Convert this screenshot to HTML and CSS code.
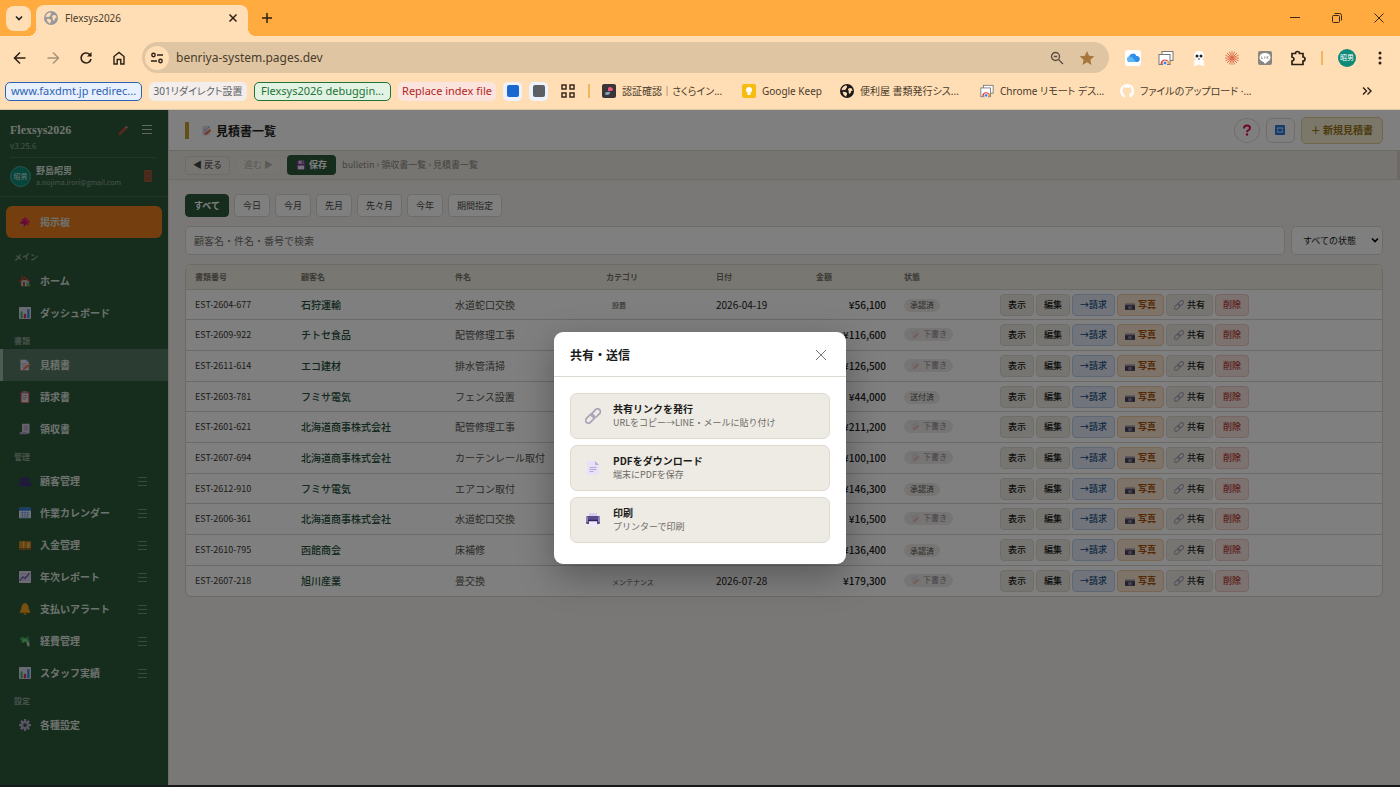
FILE: index.html
```html
<!DOCTYPE html>
<html lang="ja">
<head>
<meta charset="utf-8">
<title>Flexsys2026</title>
<link rel="stylesheet" href="styles.css">
</head>
<body>
<svg class="sprite" aria-hidden="true">
  <symbol id="i-link" viewBox="0 0 16 16"><g fill="none" stroke="#aaa0b8" stroke-width="1.700"><rect x="0" y="8" width="10" height="5.600" rx="2.800" transform="rotate(-45 5 10.800)"/><rect x="6" y="2.400" width="10" height="5.600" rx="2.800" transform="rotate(-45 11 5.200)"/></g></symbol>
  <symbol id="i-page" viewBox="0 0 16 16"><path d="M2 1h8l4 4v10H2z" fill="#e9e2f6"/><path d="M10 1v4h4z" fill="#b9aed2"/><path d="M4.500 7.500h7M4.500 9.500h7M4.500 11.500h4" stroke="#b6a6e0"/></symbol>
  <symbol id="i-printer" viewBox="0 0 16 16"><path d="M4 1h8v4H4z" fill="#d9cdf2"/><rect x="1" y="4" width="14" height="8" rx="1.500" fill="#5b4a8a"/><rect x="1" y="5" width="2" height="5" fill="#9484bd"/><rect x="13" y="5" width="2" height="5" fill="#9484bd"/><path d="M4 9h8v6H4z" fill="#efe9fb"/><path d="M3 8.500h10" stroke="#33255c" stroke-width="1.500"/></symbol>
  <symbol id="i-memo" viewBox="0 0 16 16"><path d="M2 1h8l3 3v11H2z" fill="#e4dcec"/><path d="M10 1v3h3z" fill="#62b7e6"/><path d="M4 6h6M4 8.500h5M4 11h3" stroke="#a79db8"/><path d="M6 12l7-6 2 2-7 6-3 1z" fill="#ee6a4a"/><path d="M13 6l2 2-1.500 1.300-2-2z" fill="#e8a33a"/></symbol>
  <symbol id="i-chart" viewBox="0 0 16 16"><rect width="16" height="16" rx="1" fill="#d9d4e4"/><path d="M2 6h3v9H2z" fill="#35b96a"/><path d="M6.500 9h3v6h-3z" fill="#e0345e"/><path d="M11 3h3v12h-3z" fill="#2f86e0"/></symbol>
  <symbol id="i-house" viewBox="0 0 16 16"><path d="M3 7h10v8H3z" fill="#d8cfc8"/><path d="M0 8l7-6 8 6v2L7 4.500 1 10z" fill="#c0452e"/><path d="M3 1h2v4H3z" fill="#9a4a36"/><path d="M5 9h3v6H5z" fill="#a5532f"/><path d="M9.500 9h2.500v2.500H9.500z" fill="#4a9fe0"/><path d="M10 12h5v3h-5z" fill="#5aa245"/></symbol>
  <symbol id="i-clip" viewBox="0 0 16 16"><rect x="2" y="1" width="12" height="15" rx="1" fill="#b5505c"/><path d="M3.500 3h9v12h-9z" fill="#e5d5d8"/><path d="M5 0h6v3H5z" fill="#8e8496"/><path d="M5 6h6M5 8.500h6M5 11h4" stroke="#9b7f90"/></symbol>
  <symbol id="i-receipt" viewBox="0 0 16 16"><path d="M4 1h10v13H4z" fill="#cfc9dc"/><path d="M1 12h10v3H1z" fill="#aaa2bc"/><path d="M6 4h6M6 6.500h6M6 9h6" stroke="#8e86a6"/></symbol>
  <symbol id="i-people" viewBox="0 0 16 16"><g fill="#43307e"><circle cx="5" cy="6" r="3"/><circle cx="11" cy="6" r="3"/><path d="M0 15v-3q0-3 4-3h8q4 0 4 3v3z"/></g></symbol>
  <symbol id="i-cal" viewBox="0 0 16 16"><rect y="1" width="16" height="14" rx="1" fill="#e8e6f2"/><path d="M0 1h16v4H0z" fill="#2f7fdc"/><path d="M2 7.500h12M2 10.500h12M2 13.500h12M4.500 6v9M8 6v9M11.500 6v9" stroke="#6ea4e4"/></symbol>
  <symbol id="i-money" viewBox="0 0 16 16"><rect y="3" width="16" height="11" fill="#d08620"/><path d="M5 3h2v11H5zM11 5h3v7h-3z" fill="#f0b85c"/><path d="M0 12h16v2H0z" fill="#9a6018"/></symbol>
  <symbol id="i-trend" viewBox="0 0 16 16"><rect width="16" height="16" rx="1" fill="#dcd6ea"/><path d="M1 4h14M1 8h14M1 12h14" stroke="#b3a8d0"/><path d="M1 13l4-5 3 2 6-7" fill="none" stroke="#5d4da8" stroke-width="1.600"/></symbol>
  <symbol id="i-bell" viewBox="0 0 16 16"><path d="M8 0q5 1 5 8l2 4v1H1v-1l2-4q0-7 5-8z" fill="#f0a31c"/><circle cx="8" cy="14" r="2" fill="#c07c14"/></symbol>
  <symbol id="i-cash" viewBox="0 0 16 16"><path d="M0 5l5-3 3 2 6-3-2 4 3 2-3 2-2-1-4 3-4-1 2-3z" fill="#3aa655"/><path d="M3 6l6-1 5 5-2 1-4-3-3 1z" fill="#79cf8a"/><path d="M10 9l4 1v5h-3z" fill="#b8c8b8"/></symbol>
  <symbol id="i-gear" viewBox="0 0 16 16"><g stroke="#b3a9c8" stroke-width="3"><path d="M8 0v16M0 8h16M2.500 2.500l11 11M13.500 2.500l-11 11"/></g><circle cx="8" cy="8" r="5.300" fill="#b3a9c8"/><circle cx="8" cy="8" r="2.500" fill="#2d5a3d"/></symbol>
  <symbol id="i-pin" viewBox="0 0 16 16"><path d="M8 1l7 7-2 1-1 4-9-9 4-1z" fill="#e8246c"/><path d="M1 9l6-4 4 5-4 4z" fill="#c21660"/><path d="M5 10l2 1-6 5z" fill="#b0a0b0"/></symbol>
  <symbol id="i-pencil" viewBox="0 0 16 16"><path d="M2 12L11 3l3 3-9 9-4 1z" fill="#b8503c"/><path d="M11 3l2-2 3 3-2 2z" fill="#c89090"/></symbol>
  <symbol id="i-door" viewBox="0 0 16 16"><path d="M3 0h10v16H3z" fill="#a1583a"/><path d="M5 2h6v5H5zM5 9h6v5H5z" fill="#935034"/></symbol>
  <symbol id="i-disk" viewBox="0 0 16 16"><path d="M1 1h12l2 2v12H1z" fill="#7b3f98"/><path d="M4 1h8v5H4z" fill="#d8d0e4"/><path d="M3 9h10v6H3z" fill="#efe8f6"/><path d="M9 2h2v3H9z" fill="#58306f"/></symbol>
  <symbol id="i-camera" viewBox="0 0 16 16"><path d="M0 6h16v10H0z" fill="#5a5468"/><path d="M0 6h16v2H0z" fill="#a49fb4"/><circle cx="8" cy="12" r="3" fill="#8d88a0"/><path d="M1 10h3v4H1zM12 10h3v4h-3z" fill="#3f3a4c"/></symbol>
  <symbol id="i-globe" viewBox="0 0 16 16"><circle cx="8" cy="8" r="8" fill="currentColor"/><path d="M7 1.500Q9 3 7.500 4.500T6 7Q4 6 2 7.500 1.500 3.500 7 1.500zM9.500 5.500Q11 4 13.500 5l1 3q-2-1-2 1t-2 2q-1-1-.5-2.500t-1-1.500zM3 9q2.500-.5 4 .5T8 12q-1 1-1 2.500Q3.500 13 3 9z" fill="#ffdeb5"/></symbol>
  <symbol id="i-remote" viewBox="0 0 16 16"><rect x="4" y="1.500" width="11" height="9" fill="#fff" stroke="#777"/><rect x="1" y="4.500" width="11" height="10" fill="#fff" stroke="#777"/><path d="M2.500 14a4.500 4.500 0 0 1 9 0z" fill="#e04848"/><path d="M9 10.500a4.500 4.500 0 0 1 2.500 3.500H9z" fill="#f2b330"/><circle cx="7" cy="13" r="2" fill="#3d7fe0" stroke="#fff"/></symbol>
</svg>

<header class="browser">
  <div class="tabstrip">
    <button class="tab-search" aria-label="タブを検索"><svg width="10" height="10" viewBox="0 0 10 10"><path d="M2 3.500l3 3 3-3" fill="none" stroke="#222" stroke-width="1.600"/></svg></button>
    <div class="tab">
      <svg class="favicon" width="14" height="14"><use href="#i-globe"/></svg>
      <span class="tab-title">Flexsys2026</span>
      <button class="bare" aria-label="タブを閉じる"><svg width="10" height="10" viewBox="0 0 10 10"><path d="M1.500 1.500l7 7M8.500 1.500l-7 7" stroke="#2c2014" stroke-width="1.500"/></svg></button>
    </div>
    <button class="bare new-tab" aria-label="新しいタブ"><svg width="12" height="12" viewBox="0 0 12 12"><path d="M6 1v10M1 6h10" stroke="#2c2014" stroke-width="1.500"/></svg></button>
    <div class="window-buttons">
      <button class="bare" aria-label="最小化"><svg width="12" height="12" viewBox="0 0 12 12"><path d="M1 5.500h10" stroke="#3a2a14"/></svg></button>
      <button class="bare" aria-label="元に戻す"><svg width="12" height="12" viewBox="0 0 12 12"><g fill="none" stroke="#3a2a14"><rect x="1.500" y="3.500" width="7" height="7" rx="1"/><path d="M3.500 1.500h5a2 2 0 0 1 2 2v5"/></g></svg></button>
      <button class="bare" aria-label="閉じる"><svg width="12" height="12" viewBox="0 0 12 12"><path d="M1.500 1.500l9 9M10.500 1.500l-9 9" stroke="#3a2a14"/></svg></button>
    </div>
  </div>

  <div class="toolbar">
    <nav class="nav-icons">
      <button class="bare" aria-label="戻る"><svg width="16" height="16" viewBox="0 0 16 16"><path d="M13.500 8h-11M8 2.500L2.500 8 8 13.500" fill="none" stroke="#2c2014" stroke-width="1.500"/></svg></button>
      <button class="bare" aria-label="進む"><svg width="16" height="16" viewBox="0 0 16 16"><path d="M2.500 8h11M8 2.500L13.500 8 8 13.500" fill="none" stroke="#a8937a" stroke-width="1.500"/></svg></button>
      <button class="bare" aria-label="再読み込み"><svg width="16" height="16" viewBox="0 0 16 16"><path d="M13 9a5 5 0 1 1-1.500-4.700L13 6" fill="none" stroke="#2c2014" stroke-width="1.600"/><path d="M13.500 2v4.500H9z" fill="#2c2014"/></svg></button>
      <button class="bare" aria-label="ホーム"><svg width="16" height="16" viewBox="0 0 16 16"><path d="M3 14V6.500L8 2.500l5 4V14H9.800V9.500H6.200V14z" fill="none" stroke="#2c2014" stroke-width="1.400"/></svg></button>
    </nav>
    <div class="omnibox">
      <button class="site-info" aria-label="サイト情報"><svg width="14" height="14" viewBox="0 0 14 14"><g fill="none" stroke="#2c2014" stroke-width="1.400"><circle cx="3.500" cy="4" r="1.700"/><path d="M7 4h6M1 10h6"/><circle cx="10.500" cy="10" r="1.700"/></g></svg></button>
      <input class="address" aria-label="アドレス" value="benriya-system.pages.dev">
      <svg width="14" height="14" viewBox="0 0 14 14"><g fill="none" stroke="#5c4f40" stroke-width="1.400"><circle cx="5.500" cy="5.500" r="4"/><path d="M8.500 8.500l4.500 4.500M3.800 5.500h3.400"/></g></svg>
      <svg width="16" height="16" viewBox="0 0 16 16"><path d="M8 1l2.100 4.800 5.200.5-3.900 3.500 1.100 5.100L8 12.200l-4.500 2.700 1.100-5.100L.7 6.300l5.200-.5z" fill="#a8763c"/></svg>
    </div>
    <div class="extensions">
      <svg width="16" height="16" viewBox="0 0 16 16"><rect width="16" height="16" rx="3" fill="#fff"/><path d="M4 12a3 3 0 0 1 0-5.500A4 4 0 0 1 11.500 6 3 3 0 0 1 12 12z" fill="#2f8fe6"/><path d="M4 12a3 3 0 0 1 0-5.500q2-.5 3.500 1L11 12z" fill="#5db6f6"/></svg>
      <svg width="16" height="16"><use href="#i-remote"/></svg>
      <svg width="16" height="16" viewBox="0 0 16 16"><path d="M3 11l10 4M13 11L3 15" stroke="#fff" stroke-width="2.500"/><path d="M8 1q5 0 5 4.500Q13 8 11 9v2H5V9Q3 8 3 5.500 3 1 8 1z" fill="#fff"/><circle cx="6" cy="6" r="1.500" fill="#222"/><circle cx="10" cy="6" r="1.500" fill="#222"/><path d="M7 9h2" stroke="#444"/></svg>
      <svg width="16" height="16" viewBox="0 0 16 16"><path d="M8 1v14M1 8h14M3 3l10 10M13 3L3 13M5.300 1.500l5.400 13M10.700 1.500l-5.400 13M1.500 5.300l13 5.400M1.500 10.700l13-5.400" stroke="#dd6848" stroke-width=".9"/></svg>
      <svg width="16" height="16" viewBox="0 0 16 16"><rect x="1" y="1" width="14" height="14" rx="2" fill="#8a8580"/><ellipse cx="8" cy="7.500" rx="5.500" ry="4.500" fill="#fff"/><path d="M6 11l2 3 3-3z" fill="#fff"/><path d="M4.500 6.500v2H6M7.500 6.500v2M9 8.500v-2M11.500 6.500h-1v2h1" fill="none" stroke="#8a8580" stroke-width=".7"/></svg>
      <svg width="16" height="16" viewBox="0 0 16 16"><path d="M2 3.500h3.500Q5.500 1.500 7.500 1.500t2 2H13V7q2 0 2 2t-2 2v3.500H2V11q2-.3 2-2T2 7z" fill="none" stroke="#2c2014" stroke-width="1.700"/></svg>
    </div>
    <span class="bar-divider"></span>
    <span class="profile">昭男</span>
    <button class="bare" aria-label="メニュー"><svg width="16" height="16" viewBox="0 0 16 16"><g fill="#2c2014"><circle cx="8" cy="3" r="1.500"/><circle cx="8" cy="8" r="1.500"/><circle cx="8" cy="13" r="1.500"/></g></svg></button>
  </div>

  <nav class="bookmarks">
    <button class="pill pill-blue">www.faxdmt.jp redirec...</button>
    <button class="pill pill-gray">301リダイレクト設置</button>
    <button class="pill pill-green">Flexsys2026 debuggin...</button>
    <button class="pill pill-red">Replace index file</button>
    <button class="swatch" aria-label="青のグループ"><span class="dot dot-blue"></span></button>
    <button class="swatch" aria-label="灰色のグループ"><span class="dot dot-gray"></span></button>
    <button class="bare apps" aria-label="アプリ"><svg width="14" height="14" viewBox="0 0 14 14"><g fill="none" stroke="#3a2a1c" stroke-width="1.500"><rect x="1" y="1" width="4" height="4"/><rect x="9" y="1" width="4" height="4"/><rect x="1" y="9" width="4" height="4"/><rect x="9" y="9" width="4" height="4"/></g></svg></button>
    <span class="bar-divider"></span>
    <div class="bookmark-links">
      <a href="#" class="bookmark wide"><svg width="14" height="14" viewBox="0 0 14 14"><rect width="14" height="14" rx="2" fill="#3a3438"/><path d="M6 5q0-2 2-2t3 2q0 2-2 2H6z" fill="#ee5a7c"/><path d="M3 10q0-2 2-2h3q0 3-3 3-2 0-2-1z" fill="#7da6b8"/></svg>認証確認｜さくらイン...</a>
      <a href="#" class="bookmark"><svg width="14" height="14" viewBox="0 0 14 14"><rect width="14" height="14" rx="2" fill="#f8bc10"/><circle cx="7" cy="6" r="3" fill="#fff"/><path d="M5.500 9h3v2h-3z" fill="#fff"/></svg>Google Keep</a>
      <a href="#" class="bookmark wide"><svg class="globe-dark" width="14" height="14"><use href="#i-globe"/></svg>便利屋 書類発行シス...</a>
      <a href="#" class="bookmark wide"><svg width="14" height="14"><use href="#i-remote"/></svg>Chrome リモート デス...</a>
      <a href="#" class="bookmark wide"><svg width="14" height="14" viewBox="0 0 14 14"><path d="M7 0a7 7 0 0 0-2.300 13.600V11Q3 11 2.700 9.800 4 10.500 4.800 10q-2.500-.5-2.500-3 0-1 .7-2-.3-1 .1-2 1 0 2 .8 1.900-.5 3.800 0 1-.8 2-.8.400 1 .1 2 .7 1 .7 2 0 2.500-2.500 3 .4.500.4 1.300v2.300A7 7 0 0 0 7 0z" fill="#fff"/></svg>ファイルのアップロード ·...</a>
    </div>
    <button class="bare more" aria-label="その他のブックマーク"><svg width="10" height="10" viewBox="0 0 10 10"><path d="M1 1.500L4.500 5 1 8.500M5.500 1.500L9 5 5.500 8.500" fill="none" stroke="#2c2014" stroke-width="1.400"/></svg></button>
  </nav>
</header>

<div class="app">
  <aside class="sidebar">
    <div class="brand">
      <div class="brand-row">
        <span class="brand-name">Flexsys2026</span>
        <svg width="10" height="10"><use href="#i-pencil"/></svg>
        <button class="bare" aria-label="メニューを畳む"><svg width="12" height="12" viewBox="0 0 12 12"><path d="M1 1.500h10M1 5.500h10M1 9.500h10" stroke="#c3cfc7"/></svg></button>
      </div>
      <div class="version">v3.25.6</div>
    </div>
    <div class="user">
      <span class="user-avatar">昭男</span>
      <div class="user-text"><div class="user-name">野島昭男</div><div class="user-mail">a.nojima.irori@gmail.com</div></div>
      <svg width="12" height="12"><use href="#i-door"/></svg>
    </div>
    <nav class="menu">
      <a href="#" class="board"><svg width="12" height="12"><use href="#i-pin"/></svg>掲示板</a>
      <h2 class="group">メイン</h2>
      <a href="#" class="item"><svg width="12" height="12"><use href="#i-house"/></svg>ホーム</a>
      <a href="#" class="item"><svg width="12" height="12"><use href="#i-chart"/></svg>ダッシュボード</a>
      <h2 class="group">書類</h2>
      <a href="#" class="item current"><svg width="12" height="12"><use href="#i-memo"/></svg>見積書</a>
      <a href="#" class="item"><svg width="12" height="12"><use href="#i-clip"/></svg>請求書</a>
      <a href="#" class="item"><svg width="12" height="12"><use href="#i-receipt"/></svg>領収書</a>
      <h2 class="group">管理</h2>
      <a href="#" class="item movable"><svg width="12" height="12"><use href="#i-people"/></svg>顧客管理</a>
      <a href="#" class="item movable"><svg width="12" height="12"><use href="#i-cal"/></svg>作業カレンダー</a>
      <a href="#" class="item movable"><svg width="12" height="12"><use href="#i-money"/></svg>入金管理</a>
      <a href="#" class="item movable"><svg width="12" height="12"><use href="#i-trend"/></svg>年次レポート</a>
      <a href="#" class="item movable"><svg width="12" height="12"><use href="#i-bell"/></svg>支払いアラート</a>
      <a href="#" class="item movable"><svg width="12" height="12"><use href="#i-cash"/></svg>経費管理</a>
      <a href="#" class="item movable"><svg width="12" height="12"><use href="#i-chart"/></svg>スタッフ実績</a>
      <h2 class="group">設定</h2>
      <a href="#" class="item"><svg width="12" height="12"><use href="#i-gear"/></svg>各種設定</a>
    </nav>
  </aside>

  <main class="main">
    <div class="page-head">
      <h1 class="page-title"><svg width="11" height="11"><use href="#i-memo"/></svg>見積書一覧</h1>
      <button class="help" aria-label="ヘルプ"><svg width="12" height="12" viewBox="0 0 12 12"><path d="M3 4.500Q3 1.500 6 1.500t3 2.500q0 1.500-1.500 2.200Q6 7 6 8.200" fill="none" stroke="#d81848" stroke-width="2"/><circle cx="6" cy="10.500" r="1.200" fill="#d81848"/></svg></button>
      <button class="refresh" aria-label="更新"><svg width="10" height="10" viewBox="0 0 10 10"><rect width="10" height="10" rx="1" fill="#2878d8"/><path d="M2.500 4.500V3h5v1.500M7.500 5.500V7h-5V5.500" fill="none" stroke="#d4e4f8" stroke-width="1.100"/></svg></button>
      <button class="create">＋ 新規見積書</button>
    </div>
    <div class="history">
      <button class="step">◀ 戻る</button>
      <button class="step" disabled>進む ▶</button>
      <button class="save"><svg width="10" height="10"><use href="#i-disk"/></svg>保存</button>
      <span class="crumbs">bulletin › 領収書一覧 › 見積書一覧</span>
    </div>
    <div class="content">
      <div class="filters">
        <button class="filter on">すべて</button>
        <button class="filter">今日</button>
        <button class="filter">今月</button>
        <button class="filter">先月</button>
        <button class="filter">先々月</button>
        <button class="filter">今年</button>
        <button class="filter">期間指定</button>
      </div>
      <div class="search-row">
        <input class="search" type="search" aria-label="検索" placeholder="顧客名・件名・番号で検索">
        <span class="select-wrap"><select class="state" aria-label="状態"><option>すべての状態</option></select><svg width="8" height="8" viewBox="0 0 8 8"><path d="M1 2.500l3 3 3-3" fill="none" stroke="#000" stroke-width="1.600"/></svg></span>
      </div>
      <div class="card">
        <table class="docs">
          <colgroup><col class="c-no"><col class="c-customer"><col class="c-subject"><col class="c-category"><col class="c-date"><col class="c-amount"><col class="c-state"><col></colgroup>
          <thead><tr><th>書類番号</th><th>顧客名</th><th>件名</th><th>カテゴリ</th><th>日付</th><th>金額</th><th>状態</th><th></th></tr></thead>
          <tbody id="rows"></tbody>
        </table>
      </div>
    </div>
  </main>

  <div class="overlay">
    <section class="modal" role="dialog" aria-labelledby="share-title">
      <header class="modal-head">
        <h2 class="modal-title" id="share-title">共有・送信</h2>
        <button class="bare" aria-label="閉じる"><svg width="12" height="12" viewBox="0 0 12 12"><path d="M1 1l10 10M11 1L1 11" stroke="#777"/></svg></button>
      </header>
      <div class="modal-body">
        <button class="choice"><svg width="16" height="16"><use href="#i-link"/></svg><span><strong>共有リンクを発行</strong><small>URLをコピー→LINE・メールに貼り付け</small></span></button>
        <button class="choice"><svg width="16" height="16"><use href="#i-page"/></svg><span><strong>PDFをダウンロード</strong><small>端末にPDFを保存</small></span></button>
        <button class="choice"><svg width="16" height="16"><use href="#i-printer"/></svg><span><strong>印刷</strong><small>プリンターで印刷</small></span></button>
      </div>
    </section>
  </div>
</div>
<script src="app.js"></script>
</body>
</html>
```

FILE: app.js
```js
const DRAFT = "下書き";
const docs = [
  ["EST-2604-677", "石狩運輸", "水道蛇口交換", "設置", "2026-04-19", 56100, "承認済"],
  ["EST-2609-922", "チトセ食品", "配管修理工事", "", "", 116600, DRAFT],
  ["EST-2611-614", "エコ建材", "排水管清掃", "", "", 126500, DRAFT],
  ["EST-2603-781", "フミサ電気", "フェンス設置", "", "", 44000, "送付済"],
  ["EST-2601-621", "北海道商事株式会社", "配管修理工事", "", "", 211200, DRAFT],
  ["EST-2607-694", "北海道商事株式会社", "カーテンレール取付", "", "", 100100, DRAFT],
  ["EST-2612-910", "フミサ電気", "エアコン取付", "", "", 146300, "承認済"],
  ["EST-2606-361", "北海道商事株式会社", "水道蛇口交換", "", "", 16500, DRAFT],
  ["EST-2610-795", "函館商会", "床補修", "", "", 136400, "承認済"],
  ["EST-2607-218", "旭川産業", "畳交換", "メンテナンス", "2026-07-28", 179300, DRAFT]
];

const icon = (id) => `<svg width="10" height="10"><use href="#${id}"/></svg>`;
const actions = `<div class="actions">
  <button class="act">表示</button><button class="act">編集</button>
  <button class="act act-bill">→請求</button>
  <button class="act act-photo">${icon("i-camera")}写真</button>
  <button class="act">${icon("i-link")}共有</button>
  <button class="act act-delete">削除</button></div>`;

document.getElementById("rows").innerHTML = docs.map(([no, customer, subject, category, date, amount, state]) => `
  <tr>
    <td class="no">${no}</td>
    <td class="customer">${customer}</td>
    <td class="subject">${subject}</td>
    <td><span class="category">${category}</span></td>
    <td>${date}</td>
    <td class="amount">¥${amount.toLocaleString("en-US")}</td>
    <td><span class="status${state === DRAFT ? " draft" : ""}">${state === DRAFT ? icon("i-memo") : ""}${state}</span></td>
    <td>${actions}</td>
  </tr>`).join("");
```

FILE: styles.css
```css
* { box-sizing: border-box; }

:root {
  --green: #2d5a3d;
  --line: #dedbd2;
  --soft: #eeebe4;
  --ui: "Noto Sans CJK JP", sans-serif;
  --chrome: "Noto Sans", "Noto Sans CJK JP", sans-serif;
}

body {
  margin: 0;
  height: 100vh;
  display: flex;
  flex-direction: column;
  overflow: hidden;
  font-family: var(--ui);
  font-size: 10px;
  line-height: 14px;
  color: #1c1c1a;
  background: #16181c;
}

h1, h2 { margin: 0; }
a { color: inherit; text-decoration: none; }
svg { flex: none; display: block; }
button, input, select { font: inherit; color: inherit; margin: 0; }
button { display: inline-flex; align-items: center; justify-content: center; white-space: nowrap; flex: none; }
.sprite { position: absolute; width: 0; height: 0; }
.bare { padding: 0; border: 0; background: none; }

/* Browser frame */
.browser { flex: none; font-family: var(--chrome); background: #ffdeb5; border-bottom: 1px solid #d8c6a8; color: #4a3c2c; }
.tabstrip { height: 36px; display: flex; align-items: center; padding: 0 14px 0 6px; background: #ffab40; }
.tab-search { width: 25px; height: 25px; padding: 0; border: 0; border-radius: 8px; background: #ffdeb5; }
.tab { align-self: flex-end; position: relative; width: 212px; height: 31px; margin-left: 5px; padding: 0 10px 5px 8px; display: flex; align-items: center; gap: 7px; border-radius: 8px 8px 0 0; background: #ffdeb5; }
.tab::before, .tab::after { content: ""; position: absolute; bottom: 0; width: 8px; height: 8px; }
.tab::before { left: -8px; background: radial-gradient(circle at 0 0, #ffab40 8px, #ffdeb5 8px); }
.tab::after { right: -8px; background: radial-gradient(circle at 100% 0, #ffab40 8px, #ffdeb5 8px); }
.favicon { color: #98989c; }
.tab-title { flex: 1; font-size: 10px; }
.new-tab { margin-left: 13px; }
.window-buttons { margin-left: auto; padding-right: 1px; display: flex; gap: 30px; }

.toolbar { display: flex; align-items: center; padding: 6px 12px 5px 12px; }
.nav-icons { display: flex; gap: 17px; margin-right: 15px; }
.omnibox { flex: 1; height: 31px; display: flex; align-items: center; gap: 15px; padding: 0 14px 0 3px; border-radius: 16px; background: #dfc5a2; }
.site-info { width: 24px; height: 24px; padding: 0; border: 0; border-radius: 50%; background: #ffdeb5; margin-right: -8px; }
.address { flex: 1; min-width: 0; padding: 0; border: 0; background: none; font-size: 12px; line-height: 18px; outline: 0; }
.extensions { display: flex; gap: 17px; margin: 0 15px 0 16px; }
.bar-divider { width: 2px; height: 14px; background: #f2b45c; }
.profile { width: 18px; height: 18px; margin: 0 16px 0 15px; border-radius: 50%; background: #0d8a78; color: #fff; font-size: 7px; line-height: 18px; text-align: center; white-space: nowrap; }

.bookmarks { height: 31px; display: flex; align-items: center; gap: 7px; padding: 0 28px 5px 5px; font-size: 10px; font-feature-settings: "palt"; }
.pill { height: 19px; padding: 0; border: 1px solid; border-radius: 5px; font-size: 11px; }
.pill-blue { width: 137px; color: #2c62b0; background: #e8f0fe; }
.pill-gray { width: 98px; color: #5f6368; background: #f3eeec; border-color: #f3eeec; font-size: 10px; }
.pill-green { width: 137px; color: #1d7338; background: #e2f3e4; }
.pill-red { width: 98px; color: #b3261e; background: #fce4de; border-color: #fce4de; }
.swatch { width: 19px; height: 19px; padding: 0; border: 0; border-radius: 5px; background: #eef3fb; }
.dot { width: 12px; height: 12px; border-radius: 2px; }
.dot-blue { background: #1a67cf; }
.dot-gray { background: #5c6066; }
.apps { margin: 0 6px; }
.bookmark-links { flex: 1; min-width: 0; display: flex; gap: 14px; margin-left: 5px; }
.bookmark { display: flex; align-items: center; gap: 6px; width: 84px; white-space: nowrap; }
.bookmark.wide { width: 126px; }
.globe-dark { color: #1e1a18; }

/* Application */
.app { flex: 1; min-height: 0; margin-bottom: 2px; position: relative; display: flex; background: #f5f1ed; }

.sidebar { flex: none; width: 168px; background: var(--green); color: #dce5df; }
.brand { margin: 0 12px 0 10px; padding: 12px 0 5px; border-bottom: 1px solid #456e54; }
.brand-row { display: flex; align-items: center; gap: 13px; padding-right: 3px; }
.brand-name { flex: 1; font: bold 12px/16px "Liberation Serif", serif; }
.version { padding-top: 2px; font-size: 8px; line-height: 12px; color: #93ab9b; }
.user { display: flex; align-items: center; gap: 5px; padding: 7px 14px 9px 10px; border-bottom: 1px solid #456e54; }
.user-avatar { width: 21px; height: 21px; border: 1px solid #4fae9c; border-radius: 50%; background: #0d8a78; font-size: 7px; line-height: 19px; text-align: center; white-space: nowrap; }
.user-text { flex: 1; min-width: 0; white-space: nowrap; }
.user-name { font-size: 9px; line-height: 12px; font-weight: 700; }
.user-mail { font-size: 7px; line-height: 10px; color: #93ab9b; }

.menu { padding-top: 9px; font-weight: 700; }
.board { display: flex; align-items: center; gap: 9px; height: 32px; margin: 0 6px 7px; padding: 0 13px; border-radius: 6px; background: #e87c1e; }
.group { height: 20px; padding: 4px 14px 0; font-size: 8px; line-height: 16px; color: #8fa697; }
.item { display: flex; align-items: center; gap: 9px; height: 32px; padding: 0 21px 0 16px; border-left: 3px solid transparent; }
.current { background: #577b64; border-left-color: #9fb8a8; }
.movable::after { content: ""; width: 9px; height: 9px; margin-left: auto; background: linear-gradient(#74937f, #74937f) 0 0 / 9px 1px no-repeat, linear-gradient(#74937f, #74937f) 0 4px / 9px 1px no-repeat, linear-gradient(#74937f, #74937f) 0 8px / 9px 1px no-repeat; }

.main { flex: 1; min-width: 0; border-left: 1px solid var(--line); }
.page-head { height: 41px; display: flex; align-items: center; gap: 6px; padding: 0 17px 0 16px; background: #fff; border-bottom: 1px solid #d6d4ce; }
.page-title { flex: 1; display: flex; align-items: center; gap: 4px; padding-left: 12px; border-left: 4px solid #c8a02c; font-size: 12px; line-height: 17px; }
.help, .refresh { height: 25px; padding: 0; border: 1px solid var(--line); background: #fff; }
.help { width: 26px; border-radius: 50%; }
.refresh { width: 29px; border-radius: 6px; }
.create { height: 27px; padding: 0 9px; border: 1px solid #e0cf90; border-radius: 5px; background: #f6eed2; color: #9a7616; font-weight: 700; }

.history { height: 29px; display: flex; align-items: center; gap: 6px; padding: 0 16px; background: var(--soft); border-bottom: 1px solid var(--line); border-right: 3px solid #d8d3cc; font-size: 9px; }
.step { height: 19px; padding: 0 7px; border: 1px solid #dcd8ce; border-radius: 4px; background: #f0ede6; color: #45423c; }
.step:disabled { border-color: #ebe7df; color: #b8b4aa; }
.save { height: 20px; padding: 0 9px; gap: 3px; border: 0; border-radius: 4px; background: var(--green); color: #fff; font-weight: 700; }
.crumbs { color: #8a867e; }

.content { padding: 14px 17px 0 16px; }
.filters { display: flex; gap: 5px; }
.filter { height: 23px; padding: 0 8px; border: 1px solid #dcd9d1; border-radius: 4px; background: #fff; color: #4c4a46; font-size: 9px; }
.filter.on { background: var(--green); border-color: var(--green); color: #fff; font-weight: 700; }

.search-row { display: flex; gap: 6px; margin: 9px 0; }
.search { flex: 1; min-width: 0; height: 29px; padding: 0 8px; border: 1px solid #dcd9d1; border-radius: 5px; background: #fff; outline: 0; }
.search::placeholder { color: #75716a; }
.select-wrap { position: relative; display: flex; }
.select-wrap svg { position: absolute; right: 4px; top: 10px; pointer-events: none; }
.state { appearance: none; padding: 0 24px 0 11px; border: 1px solid #dcd9d1; border-radius: 5px; background: #fff; font-size: 9px; }

.card { border: 1px solid #d8d4cb; border-radius: 6px; background: #fff; overflow: hidden; }
.docs { width: 100%; table-layout: fixed; border-collapse: separate; border-spacing: 0; }
.c-no { width: 106px; }
.c-customer { width: 154px; }
.c-subject { width: 151px; }
.c-category { width: 110px; }
.c-date { width: 100px; }
.c-amount { width: 88px; }
.c-state { width: 96px; }
.docs th { height: 25px; padding: 0 9px; background: #f2efe4; border-bottom: 1px solid #d6d4ce; color: #77736b; font-size: 8px; text-align: left; }
.docs td { height: 31px; padding: 0 9px; border-bottom: 1px solid #d6d4ce; white-space: nowrap; }
.docs tbody tr:nth-child(3n + 1) td { height: 30px; }
.docs tbody tr:last-child td { border-bottom: 0; }
.docs .no { font-size: 9px; color: #3a3936; }
.docs .customer { color: #24503a; font-weight: 500; }
.docs .subject { color: #55534e; }
.docs .amount { text-align: right; font-weight: 500; }
.category { display: inline-block; padding: 0 6px; color: #5c5a55; font-size: 7px; }
.status { display: inline-flex; align-items: center; gap: 3px; height: 13px; padding: 0 6px; border-radius: 7px; background: #ecebe9; color: #55524c; font-size: 8px; }
.draft { color: #8a8790; }
.draft svg { opacity: .4; }
.actions { display: flex; gap: 2px; }
.act { height: 22px; padding: 0 7px; gap: 3px; border: 1px solid #dedad0; border-radius: 4px; background: var(--soft); font-size: 9px; font-weight: 500; }
.act-bill { background: #e2eaf6; border-color: #bdd0ea; color: #1c4c80; }
.act-photo { background: #fbe6d2; border-color: #f0ccaa; color: #a8500c; font-weight: 700; }
.act-delete { background: #f8e6e2; border-color: #eccac4; color: #b83a34; }

/* Share dialog */
.overlay { position: absolute; inset: 0; display: flex; align-items: center; justify-content: center; background: rgba(0, 0, 0, .5); }
.modal { width: 292px; border-radius: 9px; background: #fff; box-shadow: 0 12px 36px rgba(0, 0, 0, .3); }
.modal-head { display: flex; align-items: center; justify-content: space-between; height: 45px; padding: 2px 19px 0 16px; border-bottom: 1px solid #dddad4; }
.modal-title { font-size: 12px; line-height: 18px; }
.modal-body { display: flex; flex-direction: column; gap: 6px; padding: 16px 16px 21px; }
.choice { width: 100%; height: 46px; padding: 0 14px; gap: 12px; justify-content: flex-start; text-align: left; border: 1px solid #dedad0; border-radius: 7px; background: var(--soft); }
.choice strong, .choice small { display: block; line-height: 14px; }
.choice strong { font-size: 10px; }
.choice small { font-size: 9px; color: #6c6a66; }
```
